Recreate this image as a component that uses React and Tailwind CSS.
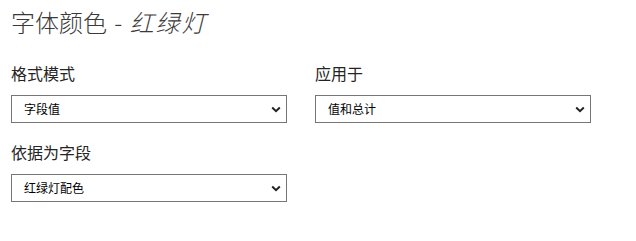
import React from "react";

const font = { fontFamily: '"Noto Sans CJK SC", "Noto Sans", sans-serif' };

const Chevron = () => (
  <svg width="10" height="7" viewBox="0 0 10 7" fill="none">
    <path d="M1.2 1.5 L5 5.2 L8.8 1.5" stroke="#222" strokeWidth="2" />
  </svg>
);

const Field = ({ label, value, className = "" }) => (
  <div className={`flex w-[276px] flex-col ${className}`}>
    <div className="text-[16px] leading-[24px] text-[#252423]">{label}</div>
    <div className="mt-[10px] flex h-[28px] items-center justify-between border border-[#767676] bg-white pl-[12px] pr-[5px] text-[12px] text-black">
      <span>{value}</span>
      <Chevron />
    </div>
  </div>
);

export default function App() {
  return (
    <div className="h-[241px] w-[636px] bg-white px-[11px] pt-[6px]" style={font}>
      <div className="text-[24px] font-light leading-[32px] text-[#3b3a39]">
        字体颜色 <span className="px-[2px]">-</span> <span className="italic tracking-[2px]">红绿灯</span>
      </div>
      <div className="mt-[23px] flex gap-[28px]">
        <Field label="格式模式" value="字段值" />
        <Field label="应用于" value="值和总计" />
      </div>
      <div className="mt-[17px] flex">
        <Field label="依据为字段" value="红绿灯配色" />
      </div>
    </div>
  );
}
